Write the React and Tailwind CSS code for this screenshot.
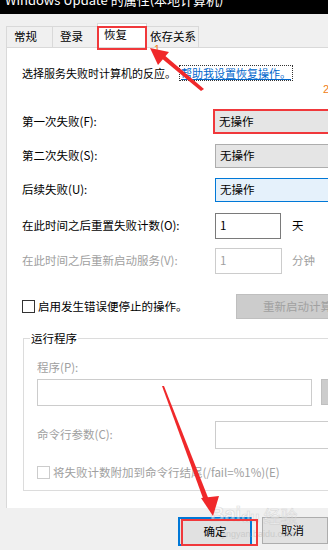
import React from "react";

const F = { fontFamily: '"Noto Sans CJK SC", "Noto Sans", sans-serif' };

function Tab({ label, w, active }) {
  if (active) {
    return (
      <div
        className="h-[24px] -mt-[3px] bg-white border border-b-0 border-[#d9d9d9] flex items-center pl-[6px] text-[11.5px] text-black relative z-10"
        style={{ width: w }}
      >
        <span className="-mt-[2px]">{label}</span>
      </div>
    );
  }
  return (
    <div
      className="h-[21px] bg-[#f0f0f0] border border-b-0 border-r-0 border-[#d9d9d9] flex items-center pl-[7px] text-[11.5px] text-black"
      style={{ width: w }}
    >
      {label}
    </div>
  );
}

function Row({ label, children, mt, gray }) {
  return (
    <div className={`flex items-center ${mt}`}>
      <div className={`w-[193px] shrink-0 text-[11.5px] ${gray ? "text-[#a0a0a0]" : "text-black"}`}>{label}</div>
      {children}
    </div>
  );
}

export default function App() {
  return (
    <div className="w-[328px] h-[550px] bg-[#f0f0f0] relative overflow-hidden" style={F}>
      {/* title bar */}
      <div className="h-[14px] bg-black overflow-hidden">
        <div className="text-white text-[13px] leading-[16px] pl-[5px] -mt-[8px] whitespace-nowrap">
          Windows Update 的属性(本地计算机)
        </div>
      </div>

      {/* tabs */}
      <div className="flex ml-[6px] mt-[12px] h-[21px] items-end">
        <Tab label="常规" w={46} />
        <Tab label="登录" w={45} />
        <Tab label="恢复" w={50} active />
        <div className="h-[21px] w-[52px] bg-[#f0f0f0] border border-b-0 border-l-0 border-[#d9d9d9] flex items-center pl-[3px] text-[11.5px] text-black">
          依存关系
        </div>
      </div>

      {/* panel */}
      <div className="ml-[6px] w-[340px] h-[461px] bg-white border-l border-t border-[#d9d9d9] pl-[15px] flex flex-col">
        <div className="mt-[17px] h-[16px] flex items-center text-[11px] text-black whitespace-nowrap">
          <span>选择服务失败时计算机的反应。</span>
          <span className="ml-[3px] text-[#0066cc] underline border border-dotted border-[#333] px-[1px] leading-[14px]">
            帮助我设置恢复操作。
          </span>
        </div>

        <Row label="第一次失败(F):" mt="mt-[28px]">
          <div className="-ml-[2px] w-[200px] h-[25px] bg-[#e5e5e5] border-2 border-[#f0383b] flex items-center pl-[4px] text-[11.5px]">
            无操作
          </div>
        </Row>
        <Row label="第二次失败(S):" mt="mt-[10px]">
          <div className="w-[200px] h-[24px] bg-[#e5e5e5] border border-[#adadad] flex items-center pl-[4px] text-[11.5px]">
            无操作
          </div>
        </Row>
        <Row label="后续失败(U):" mt="mt-[10px]">
          <div className="w-[200px] h-[24px] bg-[#e5f1fb] border border-[#0078d7] flex items-center pl-[4px] text-[11.5px]">
            无操作
          </div>
        </Row>
        <Row label="在此时间之后重置失败计数(O):" mt="mt-[11px]">
          <div className="w-[66px] h-[26px] bg-white border border-[#7a7a7a] flex items-start pt-[3px] pl-[4px] text-[11.5px]">
            1
          </div>
          <div className="ml-[11px] text-[11.5px]">天</div>
        </Row>
        <Row label="在此时间之后重新启动服务(V):" mt="mt-[9px]" gray>
          <div className="w-[67px] h-[26px] bg-white border border-[#cccccc] flex items-start pt-[3px] pl-[4px] text-[11.5px] text-[#a0a0a0]">
            1
          </div>
          <div className="ml-[10px] text-[11.5px] text-[#a0a0a0]">分钟</div>
        </Row>

        <div className="mt-[20px] flex items-center h-[25px]">
          <div className="w-[13px] h-[13px] border border-[#333] bg-white shrink-0" />
          <div className="ml-[3px] w-[198px] shrink-0 text-[11.5px] text-black">启用发生错误便停止的操作。</div>
          <div className="w-[110px] shrink-0 h-[25px] bg-[#cccccc] border border-[#bfbfbf] flex items-center pl-[26px] text-[11.5px] text-[#a0a0a0] whitespace-nowrap overflow-hidden">
            重新启动计算机选项
          </div>
        </div>

        {/* group box */}
        <div className="mt-[19px] ml-[1px] h-[153px] border-l border-t border-b border-[#dcdcdc] relative pl-[13px] flex flex-col">
          <div className="absolute -top-[9px] left-[6px] bg-white px-[1px] text-[11.5px] leading-[16px] text-black">
            运行程序
          </div>
          <div className="mt-[20px] text-[11.5px] text-[#a0a0a0] leading-[16px]">程序(P):</div>
          <div className="mt-[4px] flex">
            <div className="w-[275px] h-[27px] border border-[#cccccc] bg-white" />
            <div className="ml-[9px] w-[20px] h-[26px] bg-[#cccccc] border border-[#bfbfbf]" />
          </div>
          <div className="mt-[15px] flex items-center">
            <div className="w-[178px] text-[11.5px] text-[#a0a0a0]">命令行参数(C):</div>
            <div className="w-[120px] h-[28px] border border-[#cccccc] bg-white" />
          </div>
          <div className="mt-[15px] flex items-center">
            <div className="w-[13px] h-[13px] border border-[#cccccc] bg-white shrink-0" />
            <div className="ml-[3px] text-[11.5px] text-[#a0a0a0] whitespace-nowrap">
              将失败计数附加到命令行结尾(/fail=%1%)(E)
            </div>
          </div>
        </div>
      </div>

      {/* buttons */}
      <div className="flex mt-[9px] ml-[178px]">
        <div className="w-[80px] h-[29px] bg-[#e1e1e1] border-2 border-[#0078d7] flex items-center justify-center text-[11.5px] text-black">
          确定
        </div>
        <div className="ml-[10px] w-[70px] h-[27px] bg-[#e1e1e1] border border-[#adadad] flex items-center pl-[18px] text-[11.5px] text-black">
          取消
        </div>
      </div>

      {/* faint watermark */}
      <div className="absolute left-[210px] top-[504px] flex items-end leading-none pointer-events-none opacity-50 z-10">
        <span className="text-[20px] font-bold text-white" style={{ fontFamily: '"Liberation Sans", sans-serif', WebkitTextStroke: "0.6px #bdbdbd" }}>Bai</span>
        <span className="text-[15px] font-bold text-white" style={{ fontFamily: '"Liberation Sans", sans-serif', WebkitTextStroke: "0.6px #bdbdbd" }}>du</span>
        <span className="ml-[4px] text-[17px] text-white" style={{ WebkitTextStroke: "0.5px #bdbdbd" }}>经验</span>
      </div>
      <div className="absolute left-[222px] top-[530px] text-[9px] text-[#bdbdbd] leading-none opacity-60 pointer-events-none z-10" style={{ fontFamily: '"Liberation Sans", sans-serif' }}>
        jingyan.baidu.com
      </div>

      {/* red highlight boxes */}
      <div className="absolute left-[97px] top-[26px] w-[50px] h-[24px] border-2 border-[#f0383b] z-20" />
      <div className="absolute left-[181px] top-[519px] w-[77px] h-[27px] border-2 border-[#f0383b] z-20" />

      {/* orange annotation numbers */}
      <div className="absolute left-[154px] top-[44px] text-[11px] text-[#f08020] leading-none z-20" style={{ fontFamily: '"Liberation Sans", sans-serif' }}>1</div>
      <div className="absolute left-[323px] top-[84px] text-[11px] text-[#f08020] leading-none z-20" style={{ fontFamily: '"Liberation Sans", sans-serif' }}>2</div>

      {/* arrows */}
      <svg className="absolute left-0 top-0 z-30 pointer-events-none" width="328" height="550" viewBox="0 0 328 550">
        <polygon points="204,89 201,91 160,57 163,54" fill="#f0282a" />
        <polygon points="150,48 169,52 158,65" fill="#f0282a" />
        <polygon points="162,386 164,386 209,500 204,501" fill="#f0282a" />
        <polygon points="201,498 219,496 213,516" fill="#f0282a" />
      </svg>
    </div>
  );
}
